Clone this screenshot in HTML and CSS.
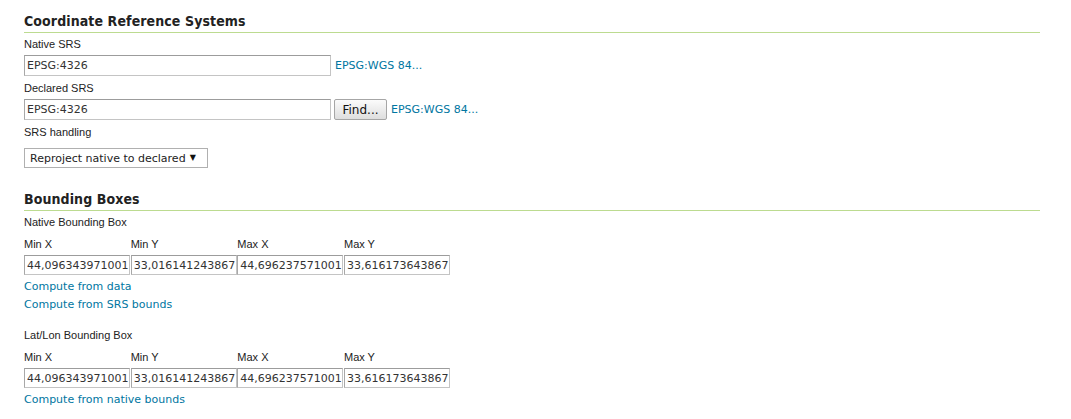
FILE: index.html
```html
<!DOCTYPE html>
<html>
<head>
<meta charset="utf-8">
<link rel="stylesheet" href="styles.css">
</head>
<body>
<div class="page">
  <h3 class="section-title">Coordinate Reference Systems</h3>
  <div class="field">
    <label class="field-label">Native SRS</label>
    <div class="field-row">
      <input class="text-input srs-input" type="text" value="EPSG:4326">
      <a class="link" href="#">EPSG:WGS 84...</a>
    </div>
  </div>
  <div class="field">
    <label class="field-label">Declared SRS</label>
    <div class="field-row">
      <input class="text-input srs-input" type="text" value="EPSG:4326">
      <button class="button" type="button">Find...</button>
      <a class="link" href="#">EPSG:WGS 84...</a>
    </div>
  </div>
  <div class="field">
    <label class="field-label">SRS handling</label>
    <div class="select-box">
      <span class="select-text">Reproject native to declared</span>
      <span class="select-arrow">▼</span>
    </div>
  </div>

  <h3 class="section-title section-second">Bounding Boxes</h3>
  <div class="bbox">
    <label class="field-label">Native Bounding Box</label>
    <div class="bbox-grid">
      <span class="field-label">Min X</span>
      <span class="field-label">Min Y</span>
      <span class="field-label">Max X</span>
      <span class="field-label">Max Y</span>
      <input class="text-input bbox-input" type="text" value="44,096343971001">
      <input class="text-input bbox-input" type="text" value="33,016141243867">
      <input class="text-input bbox-input" type="text" value="44,696237571001">
      <input class="text-input bbox-input" type="text" value="33,616173643867">
    </div>
    <div class="links">
      <a class="link" href="#">Compute from data</a>
      <a class="link" href="#">Compute from SRS bounds</a>
    </div>
  </div>
  <div class="bbox bbox-latlon">
    <label class="field-label">Lat/Lon Bounding Box</label>
    <div class="bbox-grid">
      <span class="field-label">Min X</span>
      <span class="field-label">Min Y</span>
      <span class="field-label">Max X</span>
      <span class="field-label">Max Y</span>
      <input class="text-input bbox-input" type="text" value="44,096343971001">
      <input class="text-input bbox-input" type="text" value="33,016141243867">
      <input class="text-input bbox-input" type="text" value="44,696237571001">
      <input class="text-input bbox-input" type="text" value="33,616173643867">
    </div>
    <div class="links">
      <a class="link" href="#">Compute from native bounds</a>
    </div>
  </div>
</div>
</body>
</html>
```

FILE: styles.css
```css
html, body {
  margin: 0;
  padding: 0;
  background: #ffffff;
}

.page {
  padding: 13px 0 0 24px;
  width: 1016px;
  font-family: "Liberation Sans", Arial, sans-serif;
  color: #222222;
}

.section-title {
  margin: 0;
  font-family: "DejaVu Sans Condensed", "DejaVu Sans", sans-serif;
  font-stretch: condensed;
  font-weight: bold;
  font-size: 14px;
  line-height: 17px;
  letter-spacing: 0.1px;
  padding-bottom: 2px;
  border-bottom: 1px solid #bcdb90;
  color: #222222;
}

.section-second {
  margin-top: 23px;
}

.field {
  margin-top: 4px;
}

.field + .field {
  margin-top: 5px;
}

.field-label {
  display: block;
  font-size: 11px;
  line-height: 15px;
  color: #222222;
}

.field-row {
  display: flex;
  align-items: center;
  margin-top: 3px;
  gap: 4px;
}

.text-input {
  box-sizing: border-box;
  margin: 0;
  font-family: "DejaVu Sans", sans-serif;
  font-size: 11px;
  color: #333333;
  background: #ffffff;
  border: 1px solid #c4c4c4;
  border-top-color: #9c9c9c;
  border-left-color: #a8a8a8;
  padding: 0 0 0 2px;
  outline: none;
}

.srs-input {
  width: 307px;
  height: 21px;
}

.link {
  font-family: "DejaVu Sans", sans-serif;
  font-size: 11px;
  color: #0076a1;
  text-decoration: none;
}

.button {
  box-sizing: border-box;
  margin: 0 0 0 -1px;
  height: 21px;
  width: 53px;
  padding: 0;
  font-family: "DejaVu Sans", sans-serif;
  font-size: 12px;
  color: #111111;
  background: linear-gradient(#fbfbfb, #dedede);
  border: 1px solid #a6a6a6;
  border-radius: 2px;
}

.select-box {
  box-sizing: border-box;
  display: inline-flex;
  align-items: center;
  height: 20px;
  margin-top: 8px;
  padding: 0 11px 0 5px;
  border: 1px solid #b0b0b0;
  background: #ffffff;
  font-family: "DejaVu Sans", sans-serif;
  font-size: 11px;
  color: #222222;
}

.select-arrow {
  margin-left: 4px;
  font-size: 8px;
  line-height: 1;
  color: #111111;
}

.bbox {
  margin-top: 4px;
}

.bbox-latlon {
  margin-top: 14px;
}

.bbox-grid {
  display: grid;
  grid-template-columns: repeat(4, 106px);
  column-gap: 0.67px;
  row-gap: 3px;
  margin-top: 7px;
}

.bbox-input {
  width: 106px;
  height: 20px;
}

.links {
  display: flex;
  flex-direction: column;
  align-items: flex-start;
  margin-top: 3px;
}

.links .link {
  line-height: 18px;
}
```
